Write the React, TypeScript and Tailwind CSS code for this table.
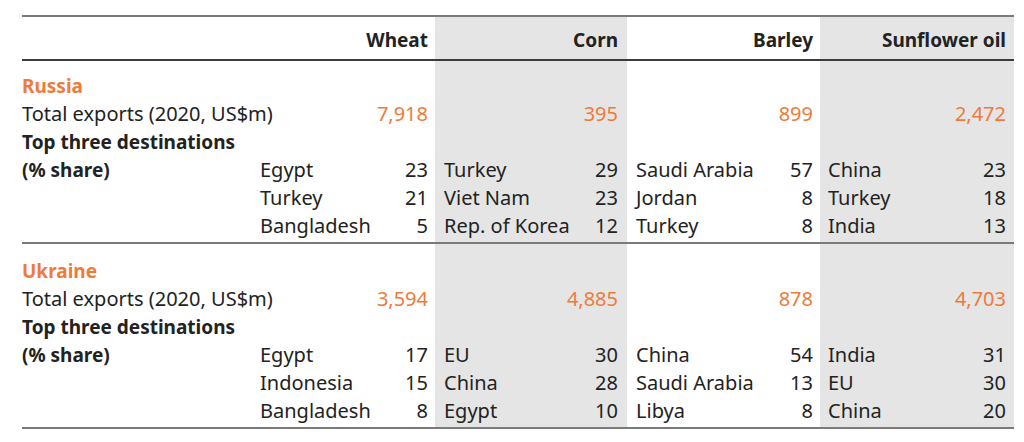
import React from "react";

interface Dest {
    name: string;
    share: number;
}

interface Country {
    name: string;
    totals: string[];
    dests: Dest[][]; // per commodity, three rows
}

const commodities = ["Wheat", "Corn", "Barley", "Sunflower oil"];

const data: Country[] = [
    {
        name: "Russia",
        totals: ["7,918", "395", "899", "2,472"],
        dests: [
            [{name: "Egypt", share: 23}, {name: "Turkey", share: 21}, {name: "Bangladesh", share: 5}],
            [{name: "Turkey", share: 29}, {name: "Viet Nam", share: 23}, {name: "Rep. of Korea", share: 12}],
            [{name: "Saudi Arabia", share: 57}, {name: "Jordan", share: 8}, {name: "Turkey", share: 8}],
            [{name: "China", share: 23}, {name: "Turkey", share: 18}, {name: "India", share: 13}],
        ],
    },
    {
        name: "Ukraine",
        totals: ["3,594", "4,885", "878", "4,703"],
        dests: [
            [{name: "Egypt", share: 17}, {name: "Indonesia", share: 15}, {name: "Bangladesh", share: 8}],
            [{name: "EU", share: 30}, {name: "China", share: 28}, {name: "Egypt", share: 10}],
            [{name: "China", share: 54}, {name: "Saudi Arabia", share: 13}, {name: "Libya", share: 8}],
            [{name: "India", share: 31}, {name: "EU", share: 30}, {name: "China", share: 20}],
        ],
    },
];

// column cells: wheat, corn (grey), barley, sunflower (grey)
const cellCls = [
    "pl-[9px] pr-[7px]",
    "pl-[9px] pr-[9px] bg-[#e5e5e5]",
    "pl-[9px] pr-[7px]",
    "pl-[8px] pr-[8px] bg-[#e5e5e5]",
];

const grid = "grid grid-cols-[229px_184px_192px_193px_194px]";

const Row: React.FC<{label?: React.ReactNode; cells?: React.ReactNode[]; h?: string}> = ({label, cells, h = "h-[28px]"}) => (
    <div className={`${grid} ${h}`}>
        <div className="flex items-center whitespace-nowrap">{label}</div>
        {cellCls.map((c, i) => (
            <div key={i} className={`${c} flex items-center whitespace-nowrap`}>
                {cells ? cells[i] : null}
            </div>
        ))}
    </div>
);

const Spacer: React.FC<{h: string}> = ({h}) => (
    <div className={`${grid} ${h}`}>
        <div/>
        {cellCls.map((c, i) => (
            <div key={i} className={c}/>
        ))}
    </div>
);

const Section: React.FC<{c: Country; first: boolean}> = ({c, first}) => (
    <div className="border-b-2 border-[#7a7a7a]">
        <Spacer h={first ? "h-[11px]" : "h-[13px]"}/>
        <Row label={<span className="font-bold text-[19px] text-[#ee7b3a]">{c.name}</span>}/>
        <Row
            label="Total exports (2020, US$m)"
            cells={c.totals.map((t, i) => (
                <span key={i} className="ml-auto text-[#ee7b3a]">{t}</span>
            ))}
        />
        <Row label={<span className="font-bold text-[19px]">Top three destinations</span>}/>
        {[0, 1, 2].map((r) => (
            <Row
                key={r}
                label={r === 0 ? <span className="font-bold text-[19px]">(% share)</span> : null}
                cells={c.dests.map((d, i) => (
                    <div key={i} className="flex w-full justify-between">
                        <span>{d[r].name}</span>
                        <span>{d[r].share}</span>
                    </div>
                ))}
            />
        ))}
        <Spacer h="h-[2px]"/>
    </div>
);

export default function App() {
    return (
        <div
            className="w-[1024px] h-[442px] bg-white pt-[15px] pl-[22px] text-[20px] leading-none text-[#222222]"
            style={{fontFamily: '"Noto Sans", sans-serif'}}
        >
            <div className="w-[992px]">
                <div className="border-t-2 border-[#7a7a7a]">
                    <div className="border-b-2 border-[#3c3c3c]">
                        <Row
                            h="h-[42px]"
                            cells={commodities.map((n, i) => (
                                <span key={i} className="ml-auto pt-[4px] font-bold text-[19px]">{n}</span>
                            ))}
                        />
                    </div>
                </div>
                {data.map((c, i) => (
                    <Section key={c.name} c={c} first={i === 0}/>
                ))}
            </div>
        </div>
    );
}
